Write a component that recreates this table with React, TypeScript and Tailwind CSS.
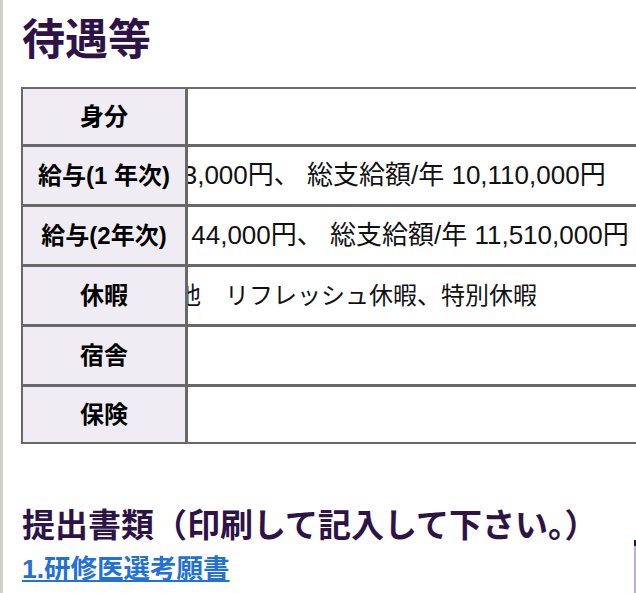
import React from "react";

const BORDER = "border-[#686868]";

type Row = {
  label: string;
  prefix?: string;
  prefixW?: number;
  rest?: string;
  h: number;
  big?: boolean;
  last?: boolean;
};

const rows: Row[] = [
  { label: "身分", h: 58 },
  { label: "給与(1 年次)", prefix: "月額 843,000円、 ", prefixW: 119, rest: "総支給額/年 10,110,000円", h: 60, big: true },
  { label: "給与(2年次)", prefix: "月額 44,000円、 ", prefixW: 142, rest: "総支給額/年 11,510,000円", h: 60, big: true },
  { label: "休暇", prefix: "有給休暇、その他　", prefixW: 37, rest: "リフレッシュ休暇、特別休暇", h: 60 },
  { label: "宿舎", h: 60 },
  { label: "保険", h: 55, last: true },
];

export default function App() {
  return (
    <div className="relative flex h-[593px] w-[636px] overflow-hidden bg-white [font-family:'Liberation_Sans','Noto_Sans_CJK_JP',sans-serif]">
      <div className="w-[3px] shrink-0 bg-[#cfcfc7]" />
      <div className="min-w-0 flex-1 pl-[18px] pt-[15px]">
        <h2 className="pl-[1px] text-[43px] leading-[50px] font-bold text-[#2e1446]">待遇等</h2>
        <div className={`mt-[22px] w-[720px] border-2 ${BORDER}`}>
          {rows.map((r) => (
            <div
              key={r.label}
              className={`flex ${r.last ? "" : `border-b-[3px] ${BORDER}`}`}
              style={{ height: r.h }}
            >
              <div className={`flex w-[165px] shrink-0 items-center justify-center border-r-[3px] ${BORDER} bg-[#efedf3] text-[24px] font-bold text-black`}>
                {r.label}
              </div>
              <div
                className={`flex min-w-0 flex-1 items-center overflow-hidden whitespace-nowrap text-[#111] ${
                  r.big ? "text-[26px]" : "text-[24px]"
                }`}
              >
                {r.prefix && (
                  <span className="flex shrink-0 justify-end overflow-hidden" style={{ width: r.prefixW }}>
                    <span className="shrink-0 whitespace-pre">{r.prefix}</span>
                  </span>
                )}
                {r.rest && <span className="shrink-0">{r.rest}</span>}
              </div>
            </div>
          ))}
        </div>
        <h3 className="mt-[63px] pl-[1px] text-[33px] leading-[37px] font-bold text-[#2e1446]">
          提出書類（印刷して記入して下さい。）
        </h3>
        <a href="#" className="mt-[8px] block pl-[1px] text-[26.5px] leading-[35px] font-bold text-[#2370d6] underline">
          1.研修医選考願書
        </a>
      </div>
      <div className="absolute right-0 top-[540px] bottom-0 w-[2px] border-t-[6px] border-[#2a1040] bg-[#c4a9d6]" />
    </div>
  );
}
